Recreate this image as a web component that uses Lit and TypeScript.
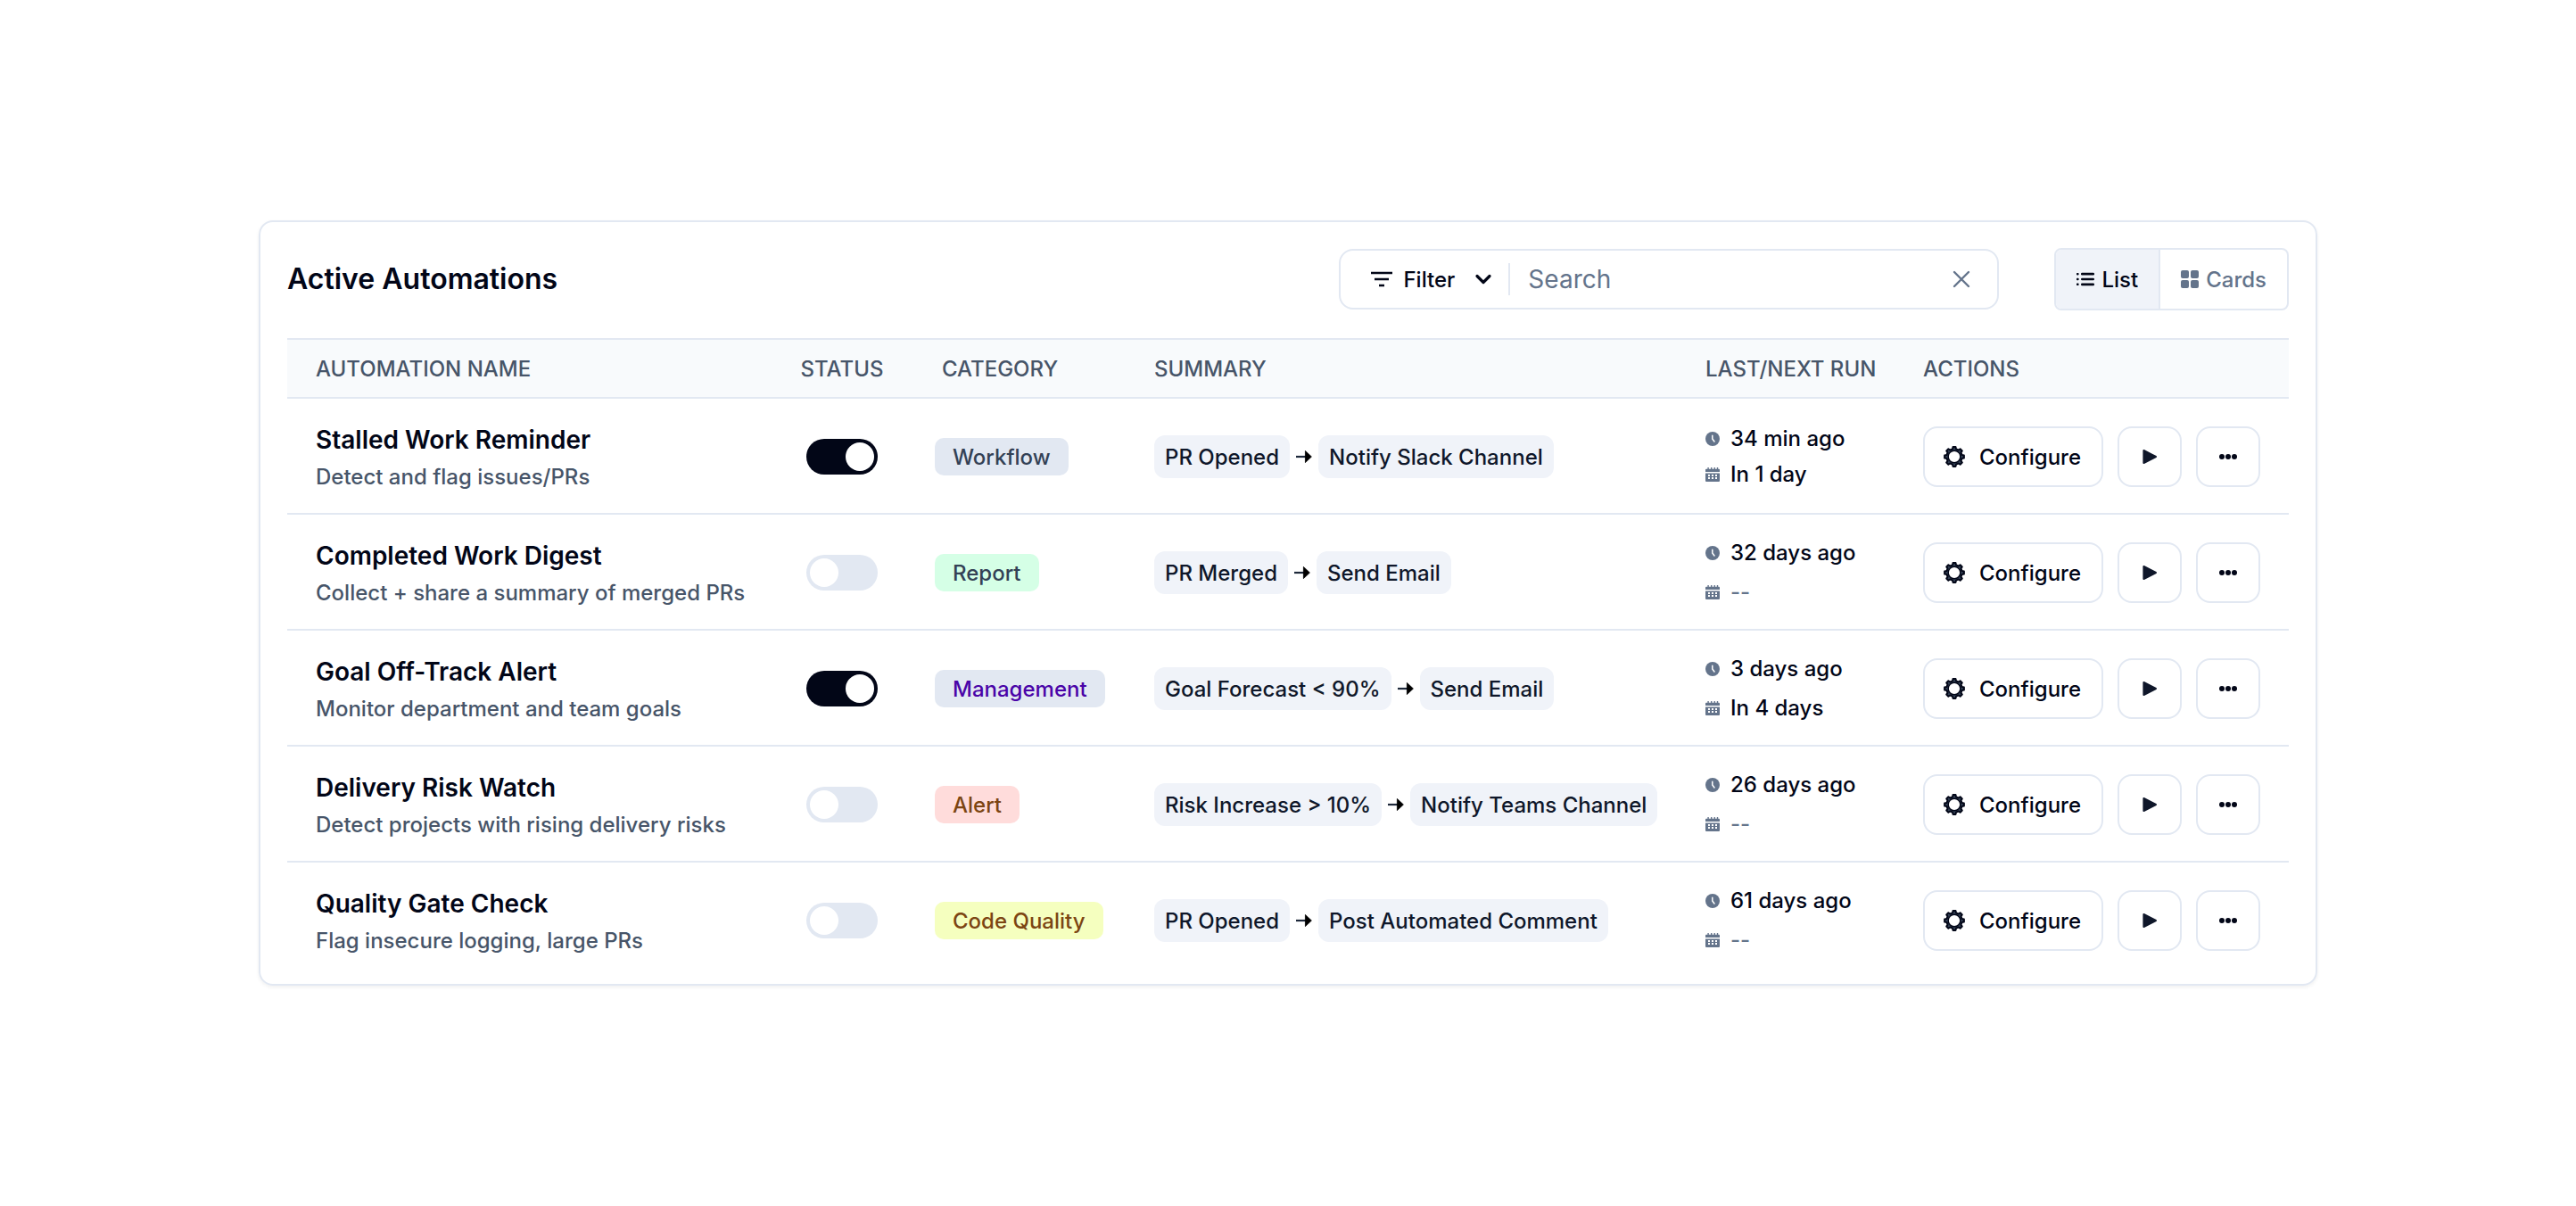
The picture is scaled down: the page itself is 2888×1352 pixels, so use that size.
import { LitElement, html, css } from "lit";
import { customElement, property, state } from "lit/decorators.js";
import { classMap } from "lit/directives/class-map.js";

interface Automation {
  name: string;
  description: string;
  enabled: boolean;
  category: string;
  tone: "workflow" | "report" | "management" | "alert" | "quality";
  trigger: string;
  action: string;
  last: string;
  next: string | null;
}

const AUTOMATIONS: Automation[] = [
  {
    name: "Stalled Work Reminder",
    description: "Detect and flag issues/PRs",
    enabled: true,
    category: "Workflow",
    tone: "workflow",
    trigger: "PR Opened",
    action: "Notify Slack Channel",
    last: "34 min ago",
    next: "In 1 day",
  },
  {
    name: "Completed Work Digest",
    description: "Collect + share a summary of merged PRs",
    enabled: false,
    category: "Report",
    tone: "report",
    trigger: "PR Merged",
    action: "Send Email",
    last: "32 days ago",
    next: null,
  },
  {
    name: "Goal Off-Track Alert",
    description: "Monitor department and team goals",
    enabled: true,
    category: "Management",
    tone: "management",
    trigger: "Goal Forecast < 90%",
    action: "Send Email",
    last: "3 days ago",
    next: "In 4 days",
  },
  {
    name: "Delivery Risk Watch",
    description: "Detect projects with rising delivery risks",
    enabled: false,
    category: "Alert",
    tone: "alert",
    trigger: "Risk Increase > 10%",
    action: "Notify Teams Channel",
    last: "26 days ago",
    next: null,
  },
  {
    name: "Quality Gate Check",
    description: "Flag insecure logging, large PRs",
    enabled: false,
    category: "Code Quality",
    tone: "quality",
    trigger: "PR Opened",
    action: "Post Automated Comment",
    last: "61 days ago",
    next: null,
  },
];

/** Outline of an eight-toothed gear centred on the origin. */
function gearOutline(outer: number, root: number): string {
  const points: string[] = [];
  for (let tooth = 0; tooth < 8; tooth++) {
    const corners: [number, number][] = [
      [root, -13],
      [outer, -8],
      [outer, 8],
      [root, 13],
    ];
    for (const [radius, offset] of corners) {
      const angle = ((tooth * 45 + offset) * Math.PI) / 180;
      points.push(`${(radius * Math.cos(angle)).toFixed(2)} ${(radius * Math.sin(angle)).toFixed(2)}`);
    }
  }
  return `M${points.join("L")}z`;
}

const filterIcon = html`<svg class="icon" width="24" height="24" viewBox="0 0 24 24" aria-hidden="true">
  <path d="M0 5h24M4 12h16M9 19h6" fill="none" stroke="currentColor" stroke-width="2.4" />
</svg>`;

const chevronIcon = html`<svg class="icon" width="20" height="20" viewBox="0 0 20 20" aria-hidden="true">
  <path d="M3 6.5l7 7 7-7" fill="none" stroke="currentColor" stroke-width="3.2" stroke-linecap="round" stroke-linejoin="round" />
</svg>`;

const closeIcon = html`<svg class="icon" width="20" height="20" viewBox="0 0 20 20" aria-hidden="true">
  <path d="M2 2l16 16M18 2L2 18" fill="none" stroke="currentColor" stroke-width="2.4" stroke-linecap="round" />
</svg>`;

const listIcon = html`<svg class="icon" width="20" height="20" viewBox="0 0 20 20" aria-hidden="true">
  <g fill="currentColor">
    <rect x="0" y="3" width="2.6" height="2.4" rx="0.8" />
    <rect x="0" y="8.8" width="2.6" height="2.4" rx="0.8" />
    <rect x="0" y="14.6" width="2.6" height="2.4" rx="0.8" />
    <rect x="5" y="2.8" width="15" height="2.6" rx="1.2" />
    <rect x="5" y="8.7" width="15" height="2.6" rx="1.2" />
    <rect x="5" y="14.6" width="15" height="2.6" rx="1.2" />
  </g>
</svg>`;

const cardsIcon = html`<svg class="icon" width="20" height="20" viewBox="0 0 20 20" aria-hidden="true">
  <g fill="currentColor">
    <rect x="0" y="0" width="9" height="9" rx="2" />
    <rect x="11" y="0" width="9" height="9" rx="2" />
    <rect x="0" y="11" width="9" height="9" rx="2" />
    <rect x="11" y="11" width="9" height="9" rx="2" />
  </g>
</svg>`;

const arrowIcon = html`<svg class="icon" width="20" height="16" viewBox="0 0 20 16" aria-hidden="true">
  <path d="M1 8h11" stroke="#1e293b" stroke-width="2.2" />
  <path d="M11.4 1.4L18.4 8l-7 6.6z" fill="#000" stroke="#000" stroke-width="0.8" stroke-linejoin="round" />
</svg>`;

const clockIcon = html`<svg class="icon muted" width="16" height="16" viewBox="0 0 16 16" aria-hidden="true">
  <circle cx="8" cy="8" r="8" fill="currentColor" />
  <path d="M7.8 4.2V8l2.2 3" fill="none" stroke="#fff" stroke-width="1.5" stroke-linecap="round" stroke-linejoin="round" />
</svg>`;

const calendarIcon = html`<svg class="icon muted" width="16" height="16" viewBox="0 0 16 16" aria-hidden="true">
  <path
    d="M0 5V2.8Q0 1.8 1 1.8H2.4V0h1.4v1.8h2.2V0h1.4v1.8h2.2V0H11v1.8h1.8V0h1.4v1.8H15q1 0 1 1V5z"
    fill="currentColor"
  />
  <path
    fill-rule="evenodd"
    d="M0 6.4h16V15q0 1-1 1H1q-1 0-1-1zM3 8v2h2V8zM7 8v2h2V8zM11 8v2h2V8zM3 11v2h2v-2zM7 11v2h2v-2zM11 11v2h2v-2z"
    fill="currentColor"
  />
</svg>`;

const gearIcon = html`<svg class="icon" width="24" height="24" viewBox="-12 -12 24 24" aria-hidden="true">
  <path d=${gearOutline(11, 8.8)} fill="#334155" stroke="#020617" stroke-width="2" stroke-linejoin="round" />
  <circle r="6.8" fill="#fff" stroke="#020617" stroke-width="1.4" />
</svg>`;

const playIcon = html`<svg class="icon" width="20" height="20" viewBox="0 0 20 20" aria-hidden="true">
  <path d="M3.4 3v14L17 10z" fill="#0f172a" stroke="#0f172a" stroke-width="2" stroke-linejoin="round" />
</svg>`;

const moreIcon = html`<svg class="icon" width="20" height="20" viewBox="0 0 20 20" aria-hidden="true">
  <g fill="#020617">
    <circle cx="3" cy="10" r="3" />
    <circle cx="10" cy="10" r="3" />
    <circle cx="17" cy="10" r="3" />
  </g>
</svg>`;

const baseStyles = css`
  * {
    box-sizing: border-box;
  }
  button,
  input {
    font: inherit;
    color: inherit;
    margin: 0;
  }
  button {
    display: inline-flex;
    align-items: center;
    justify-content: center;
    padding: 0;
    border: 0;
    background: none;
    cursor: pointer;
  }
  .icon {
    display: block;
    flex: none;
  }
`;

@customElement("automation-toolbar")
export class AutomationToolbar extends LitElement {
  @state() private view: "list" | "cards" = "list";
  @state() private query = "";

  static styles = [
    baseStyles,
    css`
      :host {
        display: flex;
        align-items: center;
        gap: 62px;
      }
      .title {
        flex: 1;
        margin: 0;
        font-size: 32px;
        line-height: 40px;
        font-weight: 600;
      }
      .search {
        display: flex;
        align-items: center;
        width: 740px;
        height: 68px;
        padding-right: 30px;
        border: 2px solid #e2e8f2;
        border-radius: 16px;
      }
      .filter {
        gap: 12px;
        height: 36px;
        padding: 0 18px 0 34px;
        border-right: 2px solid #e2e8f2;
      }
      .filter-label {
        margin-right: 10px;
      }
      .query {
        flex: 1;
        min-width: 0;
        height: 60px;
        padding: 0 20px;
        border: 0;
        outline: 0;
        background: none;
        font-size: 28px;
        font-weight: 400;
      }
      .query::placeholder {
        color: #64748b;
        opacity: 1;
      }
      .clear {
        color: #64748b;
      }
      .views {
        display: flex;
        height: 70px;
        border: 2px solid #e2e8f2;
        border-radius: 8px;
        overflow: hidden;
      }
      .view {
        gap: 8px;
        padding: 0 23px;
        color: #64748b;
      }
      .view + .view {
        border-left: 2px solid #e2e8f2;
      }
      .view.active {
        background: #f0f3f9;
        color: #020617;
      }
    `,
  ];

  render() {
    return html`
      <h1 class="title">Active Automations</h1>
      <div class="search">
        <button class="filter" type="button" aria-haspopup="menu">
          ${filterIcon}<span class="filter-label">Filter</span>${chevronIcon}
        </button>
        <input
          class="query"
          type="text"
          placeholder="Search"
          aria-label="Search automations"
          .value=${this.query}
          @input=${(e: Event) => (this.query = (e.target as HTMLInputElement).value)}
        />
        <button class="clear" type="button" aria-label="Clear search" @click=${() => (this.query = "")}>
          ${closeIcon}
        </button>
      </div>
      <div class="views" role="group" aria-label="View">
        <button
          type="button"
          class=${classMap({ view: true, active: this.view === "list" })}
          aria-pressed=${this.view === "list"}
          @click=${() => (this.view = "list")}
        >
          ${listIcon}<span>List</span>
        </button>
        <button
          type="button"
          class=${classMap({ view: true, active: this.view === "cards" })}
          aria-pressed=${this.view === "cards"}
          @click=${() => (this.view = "cards")}
        >
          ${cardsIcon}<span>Cards</span>
        </button>
      </div>
    `;
  }
}

@customElement("automation-table")
export class AutomationTable extends LitElement {
  @property({ attribute: false }) items: Automation[] = [];

  static styles = [
    baseStyles,
    css`
      :host {
        display: block;
      }
      .table {
        width: 100%;
        border-spacing: 0;
        table-layout: fixed;
      }
      .col-status {
        width: 160px;
      }
      .col-category {
        width: 246px;
      }
      .col-summary {
        width: 618px;
      }
      .col-run {
        width: 244px;
      }
      .col-actions {
        width: 434px;
      }
      .head {
        height: 68px;
        padding: 0 0 0 24px;
        border-top: 2px solid #e2e8f2;
        border-bottom: 2px solid #e2e8f2;
        background: #f8fafc;
        color: #475569;
        font-weight: 500;
        text-align: left;
        white-space: nowrap;
      }
      .head.name,
      .head.category {
        padding-left: 32px;
      }
      .head.status,
      .cell.status {
        padding-left: 0;
        text-align: center;
      }
      .cell {
        height: 130px;
        padding: 2px 0 0 24px;
        border-bottom: 2px solid #e2e8f2;
        vertical-align: middle;
        white-space: nowrap;
      }
      .row:last-child .cell {
        height: 128px;
        border-bottom: 0;
      }
      .cell.name {
        padding: 6px 0 0 32px;
        font-weight: 400;
        text-align: left;
      }
      .label,
      .description {
        display: block;
        line-height: 42px;
      }
      .label {
        font-size: 28px;
        font-weight: 600;
      }
      .description {
        color: #475569;
        font-weight: 500;
      }
      .toggle {
        appearance: none;
        display: inline-flex;
        align-items: center;
        width: 80px;
        height: 40px;
        padding: 4px;
        border-radius: 20px;
        background: #e2e8f2;
        vertical-align: middle;
        cursor: pointer;
      }
      .toggle::before {
        content: "";
        width: 32px;
        height: 32px;
        border-radius: 50%;
        background: #fff;
      }
      .toggle:checked {
        justify-content: flex-end;
        background: #020617;
      }
      .badge {
        display: inline-flex;
        align-items: center;
        height: 42px;
        padding: 0 20px;
        border-radius: 10px;
        vertical-align: middle;
      }
      .badge.workflow {
        background: #e2e8f2;
        color: #334155;
      }
      .badge.report {
        background: #d5ffe6;
        color: #334155;
      }
      .badge.management {
        background: #e2e8f2;
        color: #4a04a8;
      }
      .badge.alert {
        background: #ffdcdb;
        color: #7c4512;
      }
      .badge.quality {
        background: #f5ffbf;
        color: #7c4512;
      }
      .flow {
        display: flex;
        align-items: center;
        gap: 6px;
        color: #0f172a;
      }
      .step {
        display: flex;
        align-items: center;
        height: 48px;
        padding: 0 12px;
        border-radius: 12px;
        background: #f0f3f9;
      }
      .runs {
        display: grid;
        gap: 12px;
      }
      .row:first-child .runs {
        gap: 8px;
      }
      .run {
        display: flex;
        align-items: center;
        gap: 12px;
        line-height: 32px;
      }
      .muted,
      .empty {
        color: #64748b;
      }
      .actions {
        display: flex;
        gap: 16px;
      }
      .action {
        width: 72px;
        height: 68px;
        border: 2px solid #e2e8f2;
        border-radius: 16px;
      }
      .action.configure {
        gap: 16px;
        width: 202px;
        padding-right: 2px;
      }
    `,
  ];

  render() {
    return html`
      <table class="table">
        <colgroup>
          <col />
          <col class="col-status" />
          <col class="col-category" />
          <col class="col-summary" />
          <col class="col-run" />
          <col class="col-actions" />
        </colgroup>
        <thead>
          <tr>
            <th class="head name" scope="col">AUTOMATION NAME</th>
            <th class="head status" scope="col">STATUS</th>
            <th class="head category" scope="col">CATEGORY</th>
            <th class="head" scope="col">SUMMARY</th>
            <th class="head" scope="col">LAST/NEXT RUN</th>
            <th class="head" scope="col">ACTIONS</th>
          </tr>
        </thead>
        <tbody>
          ${this.items.map((item) => this.renderRow(item))}
        </tbody>
      </table>
    `;
  }

  private renderRow(item: Automation) {
    return html`
      <tr class="row">
        <th class="cell name" scope="row">
          <span class="label">${item.name}</span>
          <span class="description">${item.description}</span>
        </th>
        <td class="cell status">
          <input class="toggle" type="checkbox" role="switch" aria-label=${item.name} .checked=${item.enabled} />
        </td>
        <td class="cell"><span class="badge ${item.tone}">${item.category}</span></td>
        <td class="cell">
          <div class="flow">
            <span class="step">${item.trigger}</span>${arrowIcon}<span class="step">${item.action}</span>
          </div>
        </td>
        <td class="cell">
          <div class="runs">
            <span class="run">${clockIcon}${item.last}</span>
            <span class="run">
              ${calendarIcon}${item.next ?? html`<span class="empty">--</span>`}
            </span>
          </div>
        </td>
        <td class="cell">
          <div class="actions">
            <button class="action configure" type="button">${gearIcon}<span>Configure</span></button>
            <button class="action" type="button" aria-label="Run now">${playIcon}</button>
            <button class="action" type="button" aria-label="More actions">${moreIcon}</button>
          </div>
        </td>
      </tr>
    `;
  }
}

@customElement("app-root")
export class AppRoot extends LitElement {
  static styles = css`
    :host {
      display: grid;
      align-items: center;
      box-sizing: border-box;
      min-height: 100vh;
      padding: 40px 290px;
      background: #fff;
      color: #020617;
      font-family: Inter, "Liberation Sans", sans-serif;
      font-size: 24px;
      font-weight: 500;
    }
    .card {
      display: grid;
      gap: 31px;
      padding: 29px 30px 8px;
      border: 2px solid #e2e8f2;
      border-radius: 16px;
      box-shadow: 0 2px 4px rgba(0, 0, 0, 0.06);
    }
  `;

  render() {
    return html`
      <main class="card">
        <automation-toolbar></automation-toolbar>
        <automation-table .items=${AUTOMATIONS}></automation-table>
      </main>
    `;
  }
}
